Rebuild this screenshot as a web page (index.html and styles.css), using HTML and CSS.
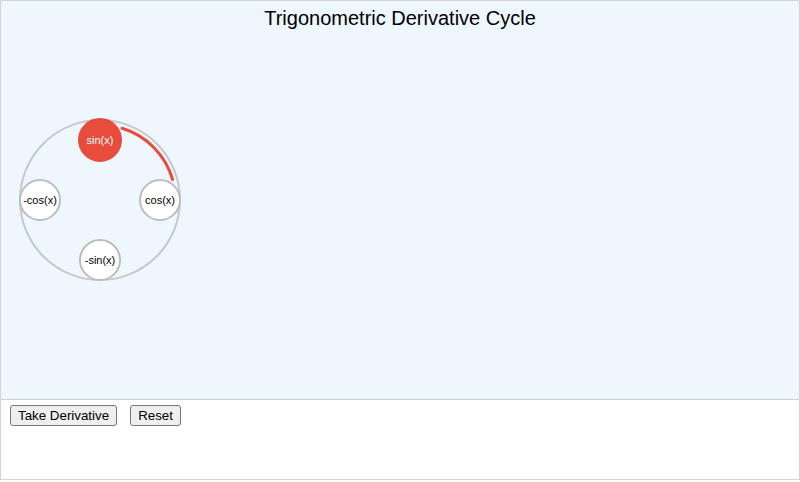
FILE: index.html
```html
<!DOCTYPE html>
<html>
<head>
<meta charset="utf-8">
<link rel="stylesheet" href="styles.css">
</head>
<body>
<div class="app">
  <svg class="stage" width="798" height="398" viewBox="0 0 798 398">
    <text class="title" x="399" y="24" text-anchor="middle">Trigonometric Derivative Cycle</text>
    <circle class="ring" cx="99" cy="199" r="80"/>
    <path class="arc" d="M 121 127.3 A 75 75 0 0 1 171.6 178.5"/>
    <g class="node active">
      <circle cx="99" cy="139" r="21"/>
      <text x="99" y="143" text-anchor="middle">sin(x)</text>
    </g>
    <g class="node">
      <circle cx="159" cy="199" r="20"/>
      <text x="159" y="203" text-anchor="middle">cos(x)</text>
    </g>
    <g class="node">
      <circle cx="99" cy="259" r="20"/>
      <text x="99" y="263" text-anchor="middle">-sin(x)</text>
    </g>
    <g class="node">
      <circle cx="39" cy="199" r="20"/>
      <text x="39" y="203" text-anchor="middle">-cos(x)</text>
    </g>
  </svg>
  <div class="controls">
    <button class="btn">Take Derivative</button>
    <button class="btn">Reset</button>
  </div>
</div>
</body>
</html>
```
FILE: styles.css
```css
html, body {
  margin: 0;
  padding: 0;
  background: #ffffff;
  font-family: "Liberation Sans", Arial, sans-serif;
}
.app {
  width: 800px;
  height: 480px;
  box-sizing: border-box;
  border: 1px solid #d4d4d4;
  display: flex;
  flex-direction: column;
}
.stage {
  display: block;
  background: #eef6fe;
  border-bottom: 1px solid #d0d0d0;
}
.title {
  font-family: "Liberation Sans", Arial, sans-serif;
  font-size: 20px;
  fill: #000;
}
.ring {
  fill: none;
  stroke: #c8c8c8;
  stroke-width: 2;
}
.arc {
  fill: none;
  stroke: #e74c3c;
  stroke-width: 3;
  stroke-linecap: round;
}
.node circle {
  fill: #ffffff;
  stroke: #bdbdbd;
  stroke-width: 2;
}
.node text {
  font-family: "Liberation Sans", Arial, sans-serif;
  font-size: 11px;
  fill: #000;
}
.node.active circle {
  fill: #e74c3c;
  stroke: #e74c3c;
}
.node.active text {
  fill: #ffffff;
}
.controls {
  display: flex;
  gap: 13px;
  padding: 5px 9px;
}
.btn {
  font-family: "Liberation Sans", Arial, sans-serif;
  font-size: 13.33px;
  padding: 1px 7px;
  height: 21px;
  background: #efefef;
  border: 1px solid #767676;
  border-radius: 3px;
  color: #000;
}
```
